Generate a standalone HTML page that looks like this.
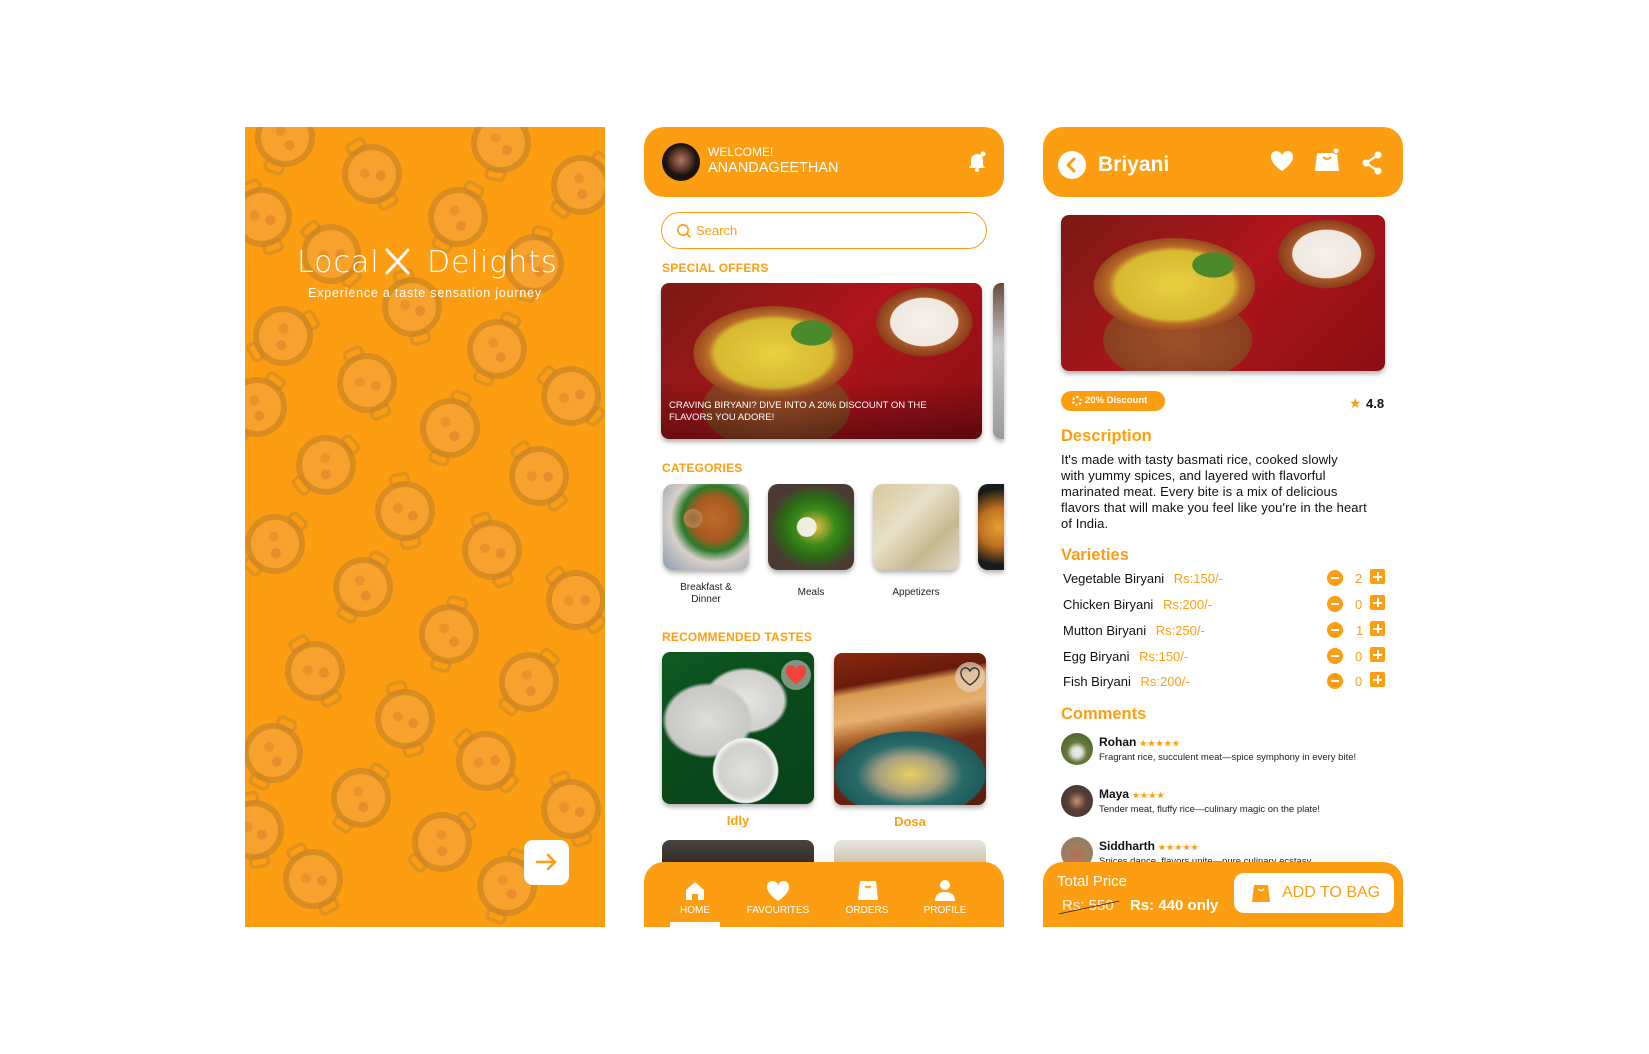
<!DOCTYPE html>
<html><head><meta charset="utf-8"><style>
*{margin:0;padding:0;box-sizing:border-box}
body{width:1649px;height:1054px;background:#fff;font-family:"Liberation Sans",sans-serif;position:relative;overflow:hidden}
.a{position:absolute}
.or{color:#FD9E12}
.hdr{background:#FD9E12;border-radius:20px}
.sec{font-size:12px;font-weight:bold;color:#FD9E12;letter-spacing:.2px}
.img{border-radius:8px;box-shadow:0 3px 5px rgba(0,0,0,.3);overflow:hidden}
.biry{background:
radial-gradient(ellipse 16% 20% at 47% 32%,#4a8a2a 0,#4a8a2a 40%,transparent 41%),
radial-gradient(ellipse 33% 40% at 35% 45%,#e8d040 0,#d8b830 55%,#b86a2a 62%,#9a4a1e 75%,transparent 76%),
radial-gradient(ellipse 38% 45% at 36% 80%,#a0502a 0,#8a4020 60%,transparent 61%),
radial-gradient(ellipse 15% 22% at 82% 25%,#f4f0ea 0,#efe8e0 70%,#a85a2a 72%,#8a3a1a 100%,transparent 100%),
linear-gradient(135deg,#7a1a14,#b0141c 50%,#8a0e14);}
.cat{width:86px;height:86px;border-radius:10px;box-shadow:0 3px 5px rgba(0,0,0,.3)}
.lbl{font-size:10px;color:#222;text-align:center}
.row{font-size:13px;color:#111}
.row span{color:#FD9E12;margin-left:6px}
.min{width:16px;height:16px;border-radius:50%;background:#FD9E12}
.min:after{content:"";position:absolute;left:4px;top:7px;width:8px;height:2px;background:#fff}
.pl{width:15px;height:15px;background:#FD9E12;border-radius:2px}
.pl:before{content:"";position:absolute;left:3px;top:6.5px;width:9px;height:2px;background:#fff}
.pl:after{content:"";position:absolute;left:6.5px;top:3px;width:2px;height:9px;background:#fff}
.num{font-size:13px;color:#FD9E12}
.nm{font-size:12px;font-weight:bold;color:#111}
.cm{font-size:9.5px;color:#222}
.st{font-size:8px;color:#FD9E12;letter-spacing:1px}
.av{width:32px;height:32px;border-radius:50%}
.nav{font-size:10px;color:#fff;text-align:center;width:80px}
</style></head><body>

<!-- PANEL 1 -->
<svg class="a" style="left:245px;top:127px" width="360" height="800" viewBox="245 127 360 800">
<rect x="245" y="127" width="360" height="800" fill="#FD9E12"/>
<defs><g id="pot"><rect x="-9" y="-37" width="18" height="10" rx="4" fill="none" stroke="#C98A2A" stroke-width="3.5" opacity=".6"/><rect x="-9" y="27" width="18" height="10" rx="4" fill="none" stroke="#C98A2A" stroke-width="3.5" opacity=".6"/><circle r="30" fill="#C98426" opacity=".7"/><circle r="24" fill="#F6A22C"/><circle cx="-6" cy="-4" r="5" fill="#E8862A" opacity=".6"/><circle cx="7" cy="6" r="5" fill="#E07E28" opacity=".6"/></g></defs>
<g>
<use href="#pot" transform="translate(285 137) rotate(20)"/><use href="#pot" transform="translate(372 174) rotate(-30)"/><use href="#pot" transform="translate(501 143) rotate(10)"/><use href="#pot" transform="translate(581 185) rotate(40)"/>
<use href="#pot" transform="translate(262 217) rotate(-20)"/><use href="#pot" transform="translate(458 217) rotate(30)"/><use href="#pot" transform="translate(331 254) rotate(-40)"/><use href="#pot" transform="translate(534 264) rotate(15)"/>
<use href="#pot" transform="translate(283 336) rotate(60)"/><use href="#pot" transform="translate(412 307) rotate(-15)"/><use href="#pot" transform="translate(497 349) rotate(25)"/><use href="#pot" transform="translate(571 396) rotate(-50)"/>
<use href="#pot" transform="translate(257 407) rotate(35)"/><use href="#pot" transform="translate(367 383) rotate(-25)"/><use href="#pot" transform="translate(326 465) rotate(50)"/><use href="#pot" transform="translate(405 511) rotate(-10)"/>
<use href="#pot" transform="translate(450 428) rotate(20)"/><use href="#pot" transform="translate(539 476) rotate(-35)"/><use href="#pot" transform="translate(275 544) rotate(45)"/><use href="#pot" transform="translate(492 550) rotate(-20)"/>
<use href="#pot" transform="translate(363 587) rotate(30)"/><use href="#pot" transform="translate(576 600) rotate(-40)"/><use href="#pot" transform="translate(449 634) rotate(15)"/><use href="#pot" transform="translate(315 671) rotate(-30)"/>
<use href="#pot" transform="translate(529 682) rotate(40)"/><use href="#pot" transform="translate(405 719) rotate(-15)"/><use href="#pot" transform="translate(273 753) rotate(25)"/><use href="#pot" transform="translate(486 761) rotate(-45)"/>
<use href="#pot" transform="translate(361 798) rotate(35)"/><use href="#pot" transform="translate(571 809) rotate(-20)"/><use href="#pot" transform="translate(442 842) rotate(50)"/><use href="#pot" transform="translate(313 879) rotate(-30)"/>
<use href="#pot" transform="translate(507 886) rotate(20)"/><use href="#pot" transform="translate(254 830) rotate(-10)"/>
</g>
<text x="297" y="272" fill="#fff" font-size="30" font-family="DejaVu Sans" font-weight="300" letter-spacing="1">Local</text>
<g stroke="#fff" stroke-width="3" stroke-linecap="round"><line x1="387" y1="250" x2="408" y2="273"/><line x1="408" y1="250" x2="387" y2="273"/></g>
<text x="427" y="272" fill="#fff" font-size="30" font-family="DejaVu Sans" font-weight="300" letter-spacing="1">Delights</text>
<text x="425" y="297" fill="#fff" font-size="12.5" text-anchor="middle" letter-spacing=".8">Experience a taste sensation journey</text>
<rect x="524" y="840" width="45" height="45" rx="9" fill="#fff"/>
<path d="M537 862h18M548 855l7 7-7 7" stroke="#FD9E12" stroke-width="2.5" fill="none" stroke-linecap="round" stroke-linejoin="round"/>
</svg>

<!-- PANEL 2 -->
<div class="a hdr" style="left:644px;top:127px;width:360px;height:70px"></div>
<div class="a" style="left:662px;top:143px;width:38px;height:38px;border-radius:50%;background:radial-gradient(circle at 50% 45%,#a87860 0,#6a4030 30%,#1a120e 55%)"></div>
<div class="a" style="left:708px;top:145px;color:#fff;font-size:12px">WELCOME!</div>
<div class="a" style="left:708px;top:160px;color:#fff;font-size:14.5px">ANANDAGEETHAN</div>
<svg class="a" style="left:966px;top:151px" width="22" height="22" viewBox="0 0 22 22"><path d="M11 3a6 6 0 0 0-6 6v5l-2 3h16l-2-3V9a6 6 0 0 0-6-6z" fill="#fff"/><circle cx="11" cy="19" r="2" fill="#fff"/><circle cx="17" cy="3" r="2.5" fill="#fff"/></svg>
<div class="a" style="left:661px;top:212px;width:326px;height:37px;border:1.5px solid #FD9E12;border-radius:19px"></div>
<svg class="a" style="left:676px;top:223px" width="16" height="16" viewBox="0 0 16 16"><circle cx="7" cy="7" r="5.2" stroke="#FD9E12" stroke-width="1.6" fill="none"/><path d="M11 11l3.5 3.5" stroke="#FD9E12" stroke-width="1.6"/></svg>
<div class="a or" style="left:696px;top:223px;font-size:13px">Search</div>
<div class="a sec" style="left:662px;top:261px">SPECIAL OFFERS</div>
<div class="a img biry" style="left:661px;top:283px;width:321px;height:156px"></div>
<div class="a" style="left:661px;top:380px;width:321px;height:59px;border-radius:0 0 8px 8px;background:linear-gradient(transparent,rgba(0,0,0,.35))"></div>
<div class="a" style="left:669px;top:400px;color:#fff;font-size:9.5px;line-height:12px">CRAVING BIRYANI? DIVE INTO A 20% DISCOUNT ON THE<br>FLAVORS YOU ADORE!</div>
<div class="a img" style="left:993px;top:283px;width:11px;height:156px;border-radius:8px 0 0 8px;background:linear-gradient(#6a4a3a,#c8c8c8 40%,#9a9a9a)"></div>
<div class="a sec" style="left:662px;top:461px">CATEGORIES</div>
<div class="a cat" style="left:663px;top:484px;background:radial-gradient(circle at 35% 40%,#9a6a3a 0,#b8804a 12%,transparent 13%),radial-gradient(ellipse at 60% 40%,#c06a2a 0,#a85a20 30%,#2a7a2a 45%,#d8d0c8 60%,#8a9ab0 100%)"></div>
<div class="a cat" style="left:768px;top:484px;background:radial-gradient(circle at 45% 50%,#f0eee0 0,#f0eee0 15%,transparent 16%),radial-gradient(ellipse at 55% 50%,#e8c040 0,#3a8a1a 30%,#2a6a14 50%,#4a3a32 70%)"></div>
<div class="a cat" style="left:873px;top:484px;background:linear-gradient(135deg,#d8c89a,#e8dfc8 40%,#c8b890 70%,#e0d8c8)"></div>
<div class="a cat" style="left:978px;top:484px;width:26px;border-radius:10px 0 0 10px;background:radial-gradient(circle at 80% 50%,#e8a030 0,#c07020 40%,#1a1a1a 80%)"></div>
<div class="a lbl" style="left:663px;top:582px;width:86px;line-height:12px">Breakfast &amp;<br>Dinner</div>
<div class="a lbl" style="left:768px;top:587px;width:86px">Meals</div>
<div class="a lbl" style="left:873px;top:587px;width:86px">Appetizers</div>
<div class="a sec" style="left:662px;top:630px">RECOMMENDED TASTES</div>
<div class="a img" style="left:662px;top:652px;width:152px;height:152px;background:radial-gradient(circle at 55% 78%,#e0e0dc 0,#d0d0cc 18%,#f4f4f4 22%,transparent 23%),radial-gradient(ellipse 30% 25% at 30% 45%,#dcdcd8 0,#c8c8c4 90%,transparent 100%),radial-gradient(ellipse 28% 22% at 55% 32%,#e4e4e0 0,#d0d0cc 90%,transparent 100%),linear-gradient(150deg,#0e5a22,#0a4a1a 50%,#08421a)"></div>
<div class="a" style="left:781px;top:660px;width:30px;height:30px;border-radius:50%;background:rgba(200,200,200,.6)"></div>
<svg class="a" style="left:784px;top:664px" width="24" height="22" viewBox="0 0 24 22"><path d="M12 20S2 14 2 7.5A5 5 0 0 1 12 5a5 5 0 0 1 10 2.5C22 14 12 20 12 20z" fill="#F2443A"/></svg>
<div class="a img" style="left:834px;top:653px;width:152px;height:152px;background:radial-gradient(ellipse 70% 40% at 50% 80%,#e8d060 0,#a8a080 30%,#2a6a6a 50%,#1e5a5c 70%,transparent 72%),linear-gradient(170deg,#8a2a10 0,#6a1a0c 20%,#d89a50 25%,#e8b070 40%,#b06a30 50%,#7a2a14 60%,#5a1a0c)"></div>
<div class="a" style="left:955px;top:662px;width:30px;height:30px;border-radius:50%;background:rgba(230,210,190,.7)"></div>
<svg class="a" style="left:958px;top:666px" width="24" height="22" viewBox="0 0 24 22"><path d="M12 19S3 13.5 3 7.5A4.5 4.5 0 0 1 12 5.5a4.5 4.5 0 0 1 9 2C21 13.5 12 19 12 19z" fill="none" stroke="#333" stroke-width="1.4"/></svg>
<div class="a or" style="left:662px;top:813px;width:152px;text-align:center;font-size:13px;font-weight:bold">Idly</div>
<div class="a or" style="left:834px;top:814px;width:152px;text-align:center;font-size:13px;font-weight:bold">Dosa</div>
<div class="a" style="left:662px;top:840px;width:152px;height:30px;border-radius:8px 8px 0 0;background:linear-gradient(#4a4440,#2a2622)"></div>
<div class="a" style="left:834px;top:840px;width:152px;height:30px;border-radius:8px 8px 0 0;background:linear-gradient(#e8e6e0,#c8b8a0)"></div>
<div class="a" style="left:644px;top:862px;width:360px;height:65px;background:#FD9E12;border-radius:20px 20px 0 0"></div>
<svg class="a" style="left:684px;top:880px" width="22" height="22" viewBox="0 0 22 22"><path d="M11 2L2 10v10h6v-6h6v6h6V10z" fill="#fff"/></svg>
<svg class="a" style="left:766px;top:880px" width="24" height="22" viewBox="0 0 24 22"><path d="M12 21S1 14 1 7a5.5 5.5 0 0 1 11-1 5.5 5.5 0 0 1 11 1c0 7-11 14-11 14z" fill="#fff"/></svg>
<svg class="a" style="left:856px;top:879px" width="24" height="23" viewBox="0 0 24 23"><path d="M4 2h16l2 19H2z" fill="#fff"/><path d="M9 7q3 3 6 0" stroke="#FD9E12" stroke-width="1.6" fill="none"/></svg>
<svg class="a" style="left:934px;top:879px" width="22" height="23" viewBox="0 0 22 23"><circle cx="11" cy="6" r="5" fill="#fff"/><path d="M1 22q0-9 10-9t10 9z" fill="#fff"/></svg>
<div class="a nav" style="left:655px;top:905px">HOME</div>
<div class="a nav" style="left:738px;top:905px">FAVOURITES</div>
<div class="a nav" style="left:827px;top:905px">ORDERS</div>
<div class="a nav" style="left:905px;top:905px">PROFILE</div>
<div class="a" style="left:670px;top:922px;width:50px;height:5px;background:#fff"></div>

<!-- PANEL 3 -->
<div class="a hdr" style="left:1043px;top:127px;width:360px;height:70px"></div>
<div class="a" style="left:1058px;top:151px;width:28px;height:28px;border-radius:50%;background:#fff"></div>
<svg class="a" style="left:1058px;top:151px" width="28" height="28" viewBox="0 0 28 28"><path d="M16 8l-6 6 6 6" stroke="#FD9E12" stroke-width="3" fill="none" stroke-linecap="round" stroke-linejoin="round"/></svg>
<div class="a" style="left:1098px;top:153px;color:#fff;font-size:21px;font-weight:bold">Briyani</div>
<svg class="a" style="left:1270px;top:150px" width="24" height="22" viewBox="0 0 24 22"><path d="M12 21S1 14 1 7a5.5 5.5 0 0 1 11-1 5.5 5.5 0 0 1 11 1c0 7-11 14-11 14z" fill="#fff"/></svg>
<svg class="a" style="left:1313px;top:147px" width="28" height="26" viewBox="0 0 28 26"><path d="M4 6h20l2 18H2z" fill="#fff"/><path d="M10 10q4 4 8 0" stroke="#FD9E12" stroke-width="1.6" fill="none"/><circle cx="23" cy="4" r="3" fill="#fff" stroke="#FD9E12" stroke-width="1"/></svg>
<svg class="a" style="left:1361px;top:151px" width="22" height="24" viewBox="0 0 22 24"><circle cx="17" cy="4" r="3.5" fill="#fff"/><circle cx="5" cy="12" r="3.5" fill="#fff"/><circle cx="17" cy="20" r="3.5" fill="#fff"/><path d="M17 4L5 12l12 8" stroke="#fff" stroke-width="2.2" fill="none"/></svg>
<div class="a img biry" style="left:1061px;top:215px;width:324px;height:156px"></div>
<div class="a" style="left:1061px;top:391px;width:104px;height:20px;border-radius:10px;background:#FD9E12;color:#fff;font-size:9.5px;font-weight:bold;padding:4px 0 0 24px">20% Discount</div>
<div class="a" style="left:1072px;top:396px;width:10px;height:10px;border-radius:50%;border:2px dotted #fff"></div>
<div class="a or" style="left:1349px;top:395px;font-size:14px">★</div>
<div class="a" style="left:1366px;top:396px;font-size:13px;font-weight:bold;color:#111">4.8</div>
<div class="a or" style="left:1061px;top:427px;font-size:16.5px;font-weight:bold">Description</div>
<div class="a" style="left:1061px;top:452px;width:345px;font-size:13px;letter-spacing:.1px;line-height:16px;color:#111;white-space:nowrap">It's made with tasty basmati rice, cooked slowly<br>with yummy spices, and layered with flavorful<br>marinated meat. Every bite is a mix of delicious<br>flavors that will make you feel like you're in the heart<br>of India.</div>
<div class="a or" style="left:1061px;top:546px;font-size:16.5px;font-weight:bold">Varieties</div>
<div class="a row" style="left:1063px;top:571px">Vegetable Biryani <span>Rs:150/-</span></div>
<div class="a row" style="left:1063px;top:597px">Chicken Biryani <span>Rs:200/-</span></div>
<div class="a row" style="left:1063px;top:623px">Mutton Biryani <span>Rs:250/-</span></div>
<div class="a row" style="left:1063px;top:649px">Egg Biryani <span>Rs:150/-</span></div>
<div class="a row" style="left:1063px;top:674px">Fish Biryani <span>Rs:200/-</span></div>
<div class="a min" style="left:1327px;top:570px"></div><div class="a num" style="left:1355px;top:571px">2</div><div class="a pl" style="left:1370px;top:569px"></div>
<div class="a min" style="left:1327px;top:596px"></div><div class="a num" style="left:1355px;top:597px">0</div><div class="a pl" style="left:1370px;top:595px"></div>
<div class="a min" style="left:1327px;top:622px"></div><div class="a num" style="left:1356px;top:623px">1</div><div class="a pl" style="left:1370px;top:621px"></div>
<div class="a min" style="left:1327px;top:648px"></div><div class="a num" style="left:1355px;top:649px">0</div><div class="a pl" style="left:1370px;top:647px"></div>
<div class="a min" style="left:1327px;top:673px"></div><div class="a num" style="left:1355px;top:674px">0</div><div class="a pl" style="left:1370px;top:672px"></div>
<div class="a or" style="left:1061px;top:705px;font-size:16.5px;font-weight:bold">Comments</div>
<div class="a av" style="left:1061px;top:733px;background:radial-gradient(circle at 50% 60%,#eee 0,#ddd 20%,#6a7a3a 40%,#3a5a2a)"></div>
<div class="a nm" style="left:1099px;top:735px">Rohan <span class="st">★★★★★</span></div>
<div class="a cm" style="left:1099px;top:752px">Fragrant rice, succulent meat—spice symphony in every bite!</div>
<div class="a av" style="left:1061px;top:785px;background:radial-gradient(circle at 50% 50%,#c89070 0,#5a4038 40%,#3a3030)"></div>
<div class="a nm" style="left:1099px;top:787px">Maya <span class="st">★★★★</span></div>
<div class="a cm" style="left:1099px;top:804px">Tender meat, fluffy rice—culinary magic on the plate!</div>
<div class="a av" style="left:1061px;top:837px;background:radial-gradient(circle at 50% 55%,#b86a50 0,#a08060 40%,#8a7a6a)"></div>
<div class="a nm" style="left:1099px;top:839px">Siddharth <span class="st">★★★★★</span></div>
<div class="a cm" style="left:1099px;top:856px">Spices dance, flavors unite—pure culinary ecstasy</div>
<div class="a" style="left:1043px;top:862px;width:360px;height:65px;background:#FD9E12;border-radius:20px 20px 0 0"></div>
<div class="a" style="left:1057px;top:873px;color:#fff;font-size:15px">Total Price</div>
<div class="a" style="left:1062px;top:897px;color:#fff;font-size:15px;opacity:.85">Rs: 550</div>
<div class="a" style="left:1058px;top:907px;width:62px;height:1px;background:#333;transform:rotate(-12deg)"></div>
<div class="a" style="left:1130px;top:897px;color:#fff;font-size:15px;font-weight:bold">Rs: 440 only</div>
<div class="a" style="left:1234px;top:873px;width:160px;height:40px;background:#fff;border-radius:10px"></div>
<svg class="a" style="left:1251px;top:884px" width="20" height="19" viewBox="0 0 20 19"><path d="M3 1h14l2 17H1z" fill="#FD9E12"/><path d="M7 5q3 3 6 0" stroke="#fff" stroke-width="1.4" fill="none"/></svg>
<div class="a or" style="left:1282px;top:884px;font-size:16px">ADD TO BAG</div>
</body></html>
